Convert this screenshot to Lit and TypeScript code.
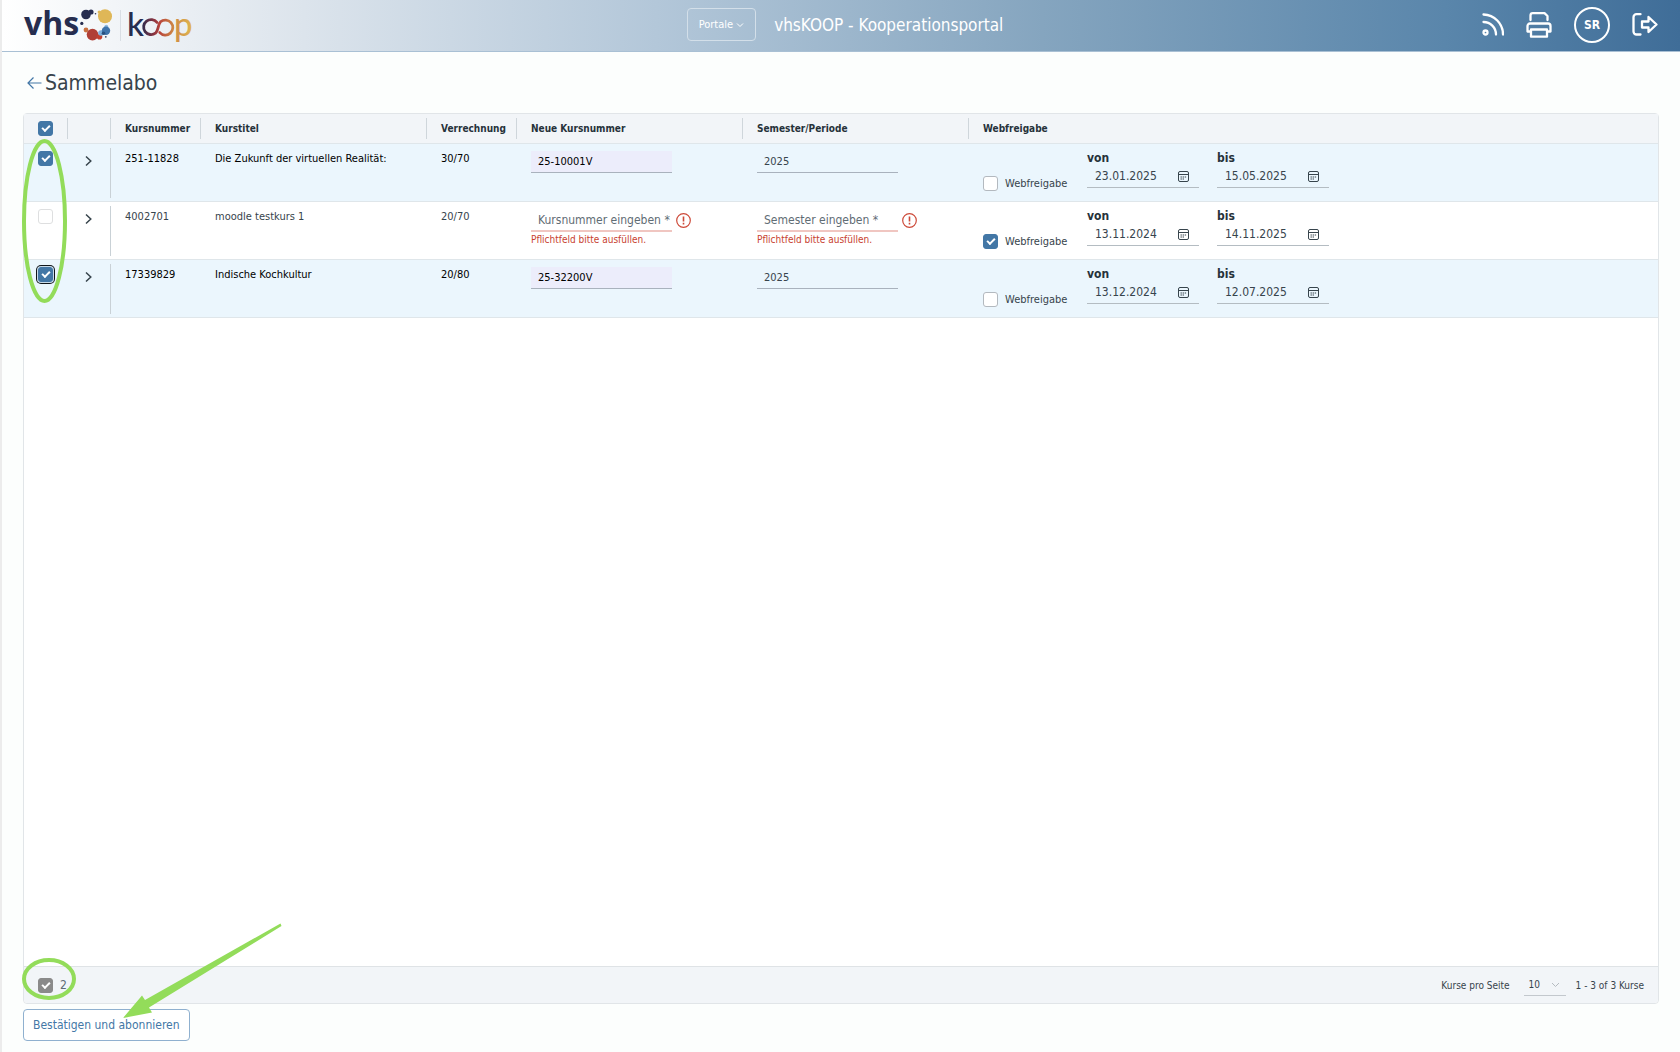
import { LitElement, html, css, nothing } from "lit";
import { customElement, property, state } from "lit/decorators.js";
import { classMap } from "lit/directives/class-map.js";

interface Course {
  id: string;
  title: string;
  split: string;
  newNumber: string;
  semester: string;
  release: boolean;
  from: string;
  to: string;
  selected: boolean;
  focused?: boolean;
}

const COURSES: Course[] = [
  { id: "251-11828", title: "Die Zukunft der virtuellen Realität:", split: "30/70", newNumber: "25-10001V", semester: "2025", release: false, from: "23.01.2025", to: "15.05.2025", selected: true },
  { id: "4002701", title: "moodle testkurs 1", split: "20/70", newNumber: "", semester: "", release: true, from: "13.11.2024", to: "14.11.2025", selected: false },
  { id: "17339829", title: "Indische Kochkultur", split: "20/80", newNumber: "25-32200V", semester: "2025", release: false, from: "13.12.2024", to: "12.07.2025", selected: true, focused: true },
];

const base = css`
  * { box-sizing: border-box; }
  button, input, select { font: inherit; color: inherit; margin: 0; }
  svg { display: block; flex: none; }
  .check {
    appearance: none;
    display: grid;
    place-items: center;
    flex: none;
    width: 15px;
    height: 15px;
    border: 1px solid #b3b9bf;
    border-radius: 3px;
    background: #fff;
  }
  .check.pale { border-color: #dedfe0; }
  .check:checked { background: #4377a6; border-color: #4377a6; }
  .check.grey:checked { background: #8a8a8a; border-color: #8a8a8a; }
  .check:checked::before {
    content: "";
    box-sizing: border-box;
    width: 8px;
    height: 5px;
    margin-bottom: 2px;
    border: solid #fff;
    border-width: 0 0 2px 2px;
    transform: rotate(-45deg);
  }
  .check.focused { box-shadow: 0 0 0 1px #c9dbe9, 0 0 0 2px #10151a; }
`;

@customElement("brand-logo")
export class BrandLogo extends LitElement {
  static styles = css`
    :host { display: block; }
    .logo { display: block; overflow: visible; }
    .vhs { font: 700 32px "Open Sans", sans-serif; fill: #262d4f; }
    .koop { font: 500 33px Lato, sans-serif; }
  `;
  render() {
    return html`<svg class="logo" width="180" height="48" viewBox="18 0 180 48" role="img" aria-label="vhs koop">
      <defs>
        <linearGradient id="inf" gradientUnits="userSpaceOnUse" x1="142" y1="0" x2="174" y2="0">
          <stop offset="0" stop-color="#2b2b4d" />
          <stop offset=".38" stop-color="#8c3440" />
          <stop offset=".55" stop-color="#b8443b" />
          <stop offset="1" stop-color="#cf8b45" />
        </linearGradient>
        <linearGradient id="pg" gradientUnits="userSpaceOnUse" x1="175" y1="0" x2="192" y2="0">
          <stop offset="0" stop-color="#cf8b45" />
          <stop offset="1" stop-color="#dfb750" />
        </linearGradient>
      </defs>
      <text class="vhs" x="24" y="34">vhs</text>
      <circle cx="86" cy="13.5" r="4.8" fill="#262d4f" />
      <circle cx="91" cy="11" r="2.6" fill="#262d4f" />
      <circle cx="95.5" cy="12.8" r=".8" fill="#262d4f" />
      <circle cx="81.8" cy="22.4" r="1.6" fill="#262d4f" />
      <circle cx="105" cy="15.3" r="7" fill="#dfb757" />
      <circle cx="99.2" cy="11" r="1.6" fill="#dfb757" />
      <circle cx="86" cy="29" r="2.4" fill="#c9703f" />
      <circle cx="92.5" cy="33.6" r="5.8" fill="#b03f35" />
      <circle cx="99.5" cy="35.8" r="2.8" fill="#c2402f" />
      <circle cx="101" cy="32" r="2.8" fill="#7eb0dc" />
      <circle cx="106.3" cy="25.6" r="1.9" fill="#8fbbe0" />
      <circle cx="106" cy="29.8" r="4.2" fill="#3f74ab" />
      <circle cx="103.5" cy="32.2" r="1.8" fill="#28507f" />
      <circle cx="105.8" cy="35.8" r=".9" fill="#3b4360" />
      <rect x="120" y="9" width="1" height="31" fill="#d9dee4" />
      <text class="koop" x="127" y="35" fill="#262d4f">k</text>
      <path d="M157 21.400 A7.500 7.500 0 1 0 155.500 32.200 C158.500 29.500 157.500 25 160.500 20.800 A7.500 7.500 0 1 1 159.800 31.600"
        fill="none" stroke="url(#inf)" stroke-width="2.800" stroke-linecap="round" />
      <text class="koop" x="174" y="35" fill="url(#pg)">p</text>
    </svg>`;
  }
}

@customElement("app-header")
export class AppHeader extends LitElement {
  static styles = [base, css`
    :host {
      display: grid;
      grid-template-columns: 1fr auto 1fr;
      align-items: center;
      height: 52px;
      padding: 0 22px 2px 16px;
      color: #fff;
      background: linear-gradient(90deg, #fff 0%, #dce4ec 18%, #b3c7d9 39%, #85a5bf 62%, #5a86ab 86%, #3f6d98 100%);
      border-bottom: 1px solid #a9c0d4;
    }
    .mid { display: flex; align-items: center; gap: 18px; padding-left: 14px; }
    .portal {
      display: flex;
      align-items: center;
      gap: 3px;
      height: 33px;
      padding: 0 11px;
      border: 1px solid #d3dfe9;
      border-radius: 4px;
      background: none;
      font-size: 11px;
    }
    .name { font-size: 17px; white-space: nowrap; }
    .tools { display: flex; align-items: center; justify-content: flex-end; gap: 22px; }
    .tool { display: block; padding: 0; border: 0; background: none; }
    .user {
      width: 36px;
      height: 36px;
      padding: 0;
      border: 2px solid #fff;
      border-radius: 50%;
      background: none;
      font-size: 12px;
      font-weight: 700;
    }
  `];
  render() {
    return html`
      <brand-logo></brand-logo>
      <div class="mid">
        <button class="portal">Portale
          <svg width="8" height="6" viewBox="0 0 8 6" fill="none" stroke="#fff"><path d="M1 1.500 4 4.500 7 1.500" /></svg>
        </button>
        <span class="name">vhsKOOP - Kooperationsportal</span>
      </div>
      <div class="tools">
        <button class="tool" aria-label="RSS">
          <svg width="22" height="23" viewBox="0 0 22 23" fill="none" stroke="#fff" stroke-width="2.300" stroke-linecap="round">
            <circle cx="3.500" cy="19.500" r="2" /><path d="M1.500 9A12.500 12.500 0 0 1 14 21.500M1.500 1.500A20 20 0 0 1 21 21.500" />
          </svg>
        </button>
        <button class="tool" aria-label="Drucken">
          <svg width="26" height="26" viewBox="0 0 26 26" fill="none" stroke="#fff" stroke-width="2.300" stroke-linejoin="round" stroke-linecap="round">
            <path d="M4.500 8V3.500a2.300 2.300 0 0 1 2.300-2.300h11.700L21.500 4v4M5 19.500H1.500v-5.500a2.500 2.500 0 0 1 2.500-2.500h18a2.500 2.500 0 0 1 2.500 2.500v5.500H21M5 17.500h16v7.200H5z" />
          </svg>
        </button>
        <button class="user">SR</button>
        <button class="tool" aria-label="Abmelden">
          <svg width="26" height="23" viewBox="0 0 26 23" fill="none" stroke="#fff" stroke-width="2.300" stroke-linejoin="round" stroke-linecap="round">
            <path d="M8.500 1.200H4.500a3 3 0 0 0-3 3v14.300a3 3 0 0 0 3 3h4" />
            <path d="M10 8.500h6.500V4l8 7.500-8 7.500v-4.500H10z" />
          </svg>
        </button>
      </div>`;
  }
}

@customElement("date-field")
export class DateField extends LitElement {
  @property() label = "";
  @property() value = "";
  static styles = [base, css`
    :host { display: flex; flex-direction: column; width: 112px; }
    .label { font-size: 12px; font-weight: 700; line-height: 14px; color: #26323a; }
    .box { display: flex; align-items: center; height: 23px; border-bottom: 1px solid #b4bcc2; }
    .input { width: 80px; min-width: 0; flex: 1; height: 21px; padding: 0 0 0 8px; border: 0; background: none; outline: none; font-size: 12px; }
    .pick { padding: 0; margin-right: 10px; border: 0; background: none; }
  `];
  render() {
    return html`
      <label class="label" for="d">${this.label}</label>
      <div class="box">
        <input class="input" id="d" .value=${this.value} />
        <button class="pick" aria-label="Datum wählen">
          <svg width="11" height="11" viewBox="0 0 11 11" fill="none" stroke="#37444c">
            <rect x=".5" y=".5" width="10" height="10" rx="1.500" /><path d="M1 3.500h9" /><path d="M2.500 6h6M2.500 8h4" stroke-dasharray="1.400 .7" stroke-width="1.100" />
          </svg>
        </button>
      </div>`;
  }
}

@customElement("course-field")
export class CourseField extends LitElement {
  @property() value = "";
  @property() hint = "";
  @property({ type: Boolean }) filled = false;
  static styles = [base, css`
    :host { display: block; }
    .line { display: flex; align-items: center; gap: 4px; }
    .input {
      width: 141px;
      height: 22px;
      padding: 0 0 0 7px;
      border: 0;
      border-bottom: 1px solid #a9b2bd;
      border-radius: 0;
      background: none;
      outline: none;
    }
    .input.filled { background: #ecedfb; color: #000; }
    .input.bad { height: 23px; padding-top: 1px; border-bottom: 2px solid #f0c6c1; font-size: 12px; }
    .input::placeholder { color: #5f6c74; opacity: 1; }
    .error { margin: 2px 0 0; font-size: 10px; line-height: 12px; color: #c8412f; }
  `];
  render() {
    const bad = !this.value;
    return html`
      <div class="line">
        <input class=${classMap({ input: true, bad, filled: this.filled })} aria-label=${this.hint}
          placeholder=${`${this.hint} eingeben *`} .value=${this.value} />
        ${bad ? html`<svg width="15" height="15" viewBox="0 0 15 15" fill="none" stroke="#cd4a39" stroke-width="1.200">
          <circle cx="7.500" cy="7.500" r="6.800" /><path d="M7.500 3.500v5M7.500 9.800v1.600" stroke-width="1.600" /></svg>` : nothing}
      </div>
      ${bad ? html`<p class="error">Pflichtfeld bitte ausfüllen.</p>` : nothing}`;
  }
}

@customElement("course-grid")
export class CourseGrid extends LitElement {
  @state() private courses = COURSES;

  static styles = [base, css`
    :host {
      position: relative;
      display: flex;
      flex-direction: column;
      flex: 1;
      background: #fff;
      border: 1px solid #e1e5e8;
      border-radius: 4px;
    }
    .table { width: 100%; table-layout: fixed; border-spacing: 0; }
    .c-check { width: 44px; }
    .c-open { width: 43px; }
    .c-small { width: 90px; }
    .c-wide { width: 226px; }
    .head th {
      height: 30px;
      padding: 0 0 0 14px;
      text-align: left;
      font-size: 10px;
      white-space: nowrap;
      color: #26323a;
      border-bottom: 1px solid #dfe6ea;
      background: linear-gradient(#cfd6db, #cfd6db) right center / 1px 21px no-repeat #f2f5f8;
    }
    .head th:last-child { background: #f2f5f8; }
    .row td { height: 58px; padding: 7px 0 0 14px; vertical-align: top; font-size: 11px; line-height: 16px; border-bottom: 1px solid #dfe6ea; white-space: nowrap; }
    .row.on { background: #ebf6fd; }
    .row.on .text { color: #000; }
    .row .sep { background: linear-gradient(#c9d1d6, #c9d1d6) right center / 1px 50px no-repeat; }
    .open { display: block; padding: 4px 4px 4px 3px; border: 0; background: none; }
    .release { display: flex; gap: 18px; align-items: flex-start; }
    .web { display: flex; align-items: center; gap: 7px; width: 86px; height: 15px; margin-top: 25px; }
    .space { flex: 1; }
    .foot {
      position: relative;
      display: flex;
      align-items: center;
      height: 37px;
      padding: 0 14px;
      font-size: 10px;
      background: #f2f5f8;
      border-top: 1px solid #dfe3e6;
      border-radius: 0 0 4px 4px;
    }
    .count { display: flex; align-items: center; gap: 7px; flex: 1; font-size: 12px; color: #5f6c74; }
    .size { display: flex; align-items: center; gap: 14px; }
    .pick { display: flex; align-items: center; border-bottom: 1px solid #c3c8cd; margin-right: 10px; width: 42px; height: 22px; }
    .select { appearance: none; width: 27px; height: 20px; padding: 0 0 0 5px; border: 0; background: none; }
    .mark { position: absolute; pointer-events: none; z-index: 1; }
    .mark-rows { left: -3px; top: 24px; }
    .mark-count { left: -2px; bottom: -18px; }
  `];

  private toggle(i: number) {
    this.courses = this.courses.map((c, n) => (n === i ? { ...c, selected: !c.selected } : c));
  }

  render() {
    return html`
      <table class="table">
        <colgroup>
          <col class="c-check" /><col class="c-open" /><col class="c-small" /><col class="c-wide" />
          <col class="c-small" /><col class="c-wide" /><col class="c-wide" /><col />
        </colgroup>
        <thead>
          <tr class="head">
            <th><input class="check" type="checkbox" aria-label="Alle auswählen" checked /></th>
            <th></th><th>Kursnummer</th><th>Kurstitel</th><th>Verrechnung</th>
            <th>Neue Kursnummer</th><th>Semester/Periode</th><th>Webfreigabe</th>
          </tr>
        </thead>
        <tbody>${this.courses.map((c, i) => this.row(c, i))}</tbody>
      </table>
      <div class="space"></div>
      <div class="foot">
        <label class="count"><input class="check grey" type="checkbox" checked />${this.courses.filter((c) => c.selected).length}</label>
        <div class="size">
          <label for="size">Kurse pro Seite</label>
          <div class="pick">
            <select class="select" id="size"><option>10</option><option>25</option></select>
            <svg width="9" height="6" viewBox="0 0 9 6" fill="none" stroke="#b5bbc0"><path d="M1 1 4.500 4.500 8 1" /></svg>
          </div>
        </div>
        <span>1 - 3 of 3 Kurse</span>
        <svg class="mark mark-count" width="262" height="100" viewBox="22 921 262 100">
          <ellipse cx="49" cy="979" rx="25" ry="19" fill="none" stroke="#93dc5a" stroke-width="4" />
          <path d="M280.500 923.500 145 1000 142 995.500 123 1018 152 1012.500 149 1007.500 281.500 926z" fill="#93dc5a" />
        </svg>
      </div>
      <svg class="mark mark-rows" width="48" height="168" viewBox="0 0 48 168">
        <ellipse cx="23.500" cy="83" rx="20.500" ry="80" fill="none" stroke="#93dc5a" stroke-width="4" />
      </svg>`;
  }

  private row(c: Course, i: number) {
    return html`
      <tr class=${classMap({ row: true, on: c.selected })}>
        <td><input class=${classMap({ check: true, pale: true, focused: !!c.focused })} type="checkbox"
          aria-label=${`${c.title} auswählen`} .checked=${c.selected} @change=${() => this.toggle(i)} /></td>
        <td class="sep"><button class="open" aria-label="Details">
          <svg width="8" height="12" viewBox="0 0 8 12" fill="none" stroke="#37444c" stroke-width="1.500"><path d="M1 1.500 5.800 6 1 10.500" /></svg>
        </button></td>
        <td class="text">${c.id}</td>
        <td class="text">${c.title}</td>
        <td class="text">${c.split}</td>
        <td><course-field hint="Kursnummer" value=${c.newNumber} ?filled=${!!c.newNumber}></course-field></td>
        <td><course-field hint="Semester" value=${c.semester}></course-field></td>
        <td><div class="release">
          <label class="web"><input class="check" type="checkbox" .checked=${c.release} />Webfreigabe</label>
          <date-field label="von" value=${c.from}></date-field>
          <date-field label="bis" value=${c.to}></date-field>
        </div></td>
      </tr>`;
  }
}

@customElement("app-root")
export class AppRoot extends LitElement {
  static styles = [base, css`
    :host {
      display: flex;
      flex-direction: column;
      min-height: 100vh;
      box-sizing: border-box;
      border-left: 2px solid #ececec;
      background: #fcfefd;
      color: #37444c;
      font: 12px "DejaVu Sans Condensed", "DejaVu Sans", sans-serif;
    }
    .page { display: flex; flex-direction: column; flex: 1; padding: 16px 21px 11px 21px; }
    .title { display: flex; align-items: center; gap: 3px; height: 30px; margin-bottom: 15px; padding-left: 4px; }
    .back { display: block; }
    .heading { margin: 0; font-size: 21px; font-weight: 400; }
    .confirm {
      align-self: flex-start;
      height: 32px;
      margin-top: 5px;
      padding: 0 9px;
      border: 1px solid #8fb0cf;
      border-radius: 4px;
      background: #fff;
      color: #4377a6;
    }
  `];
  render() {
    return html`
      <app-header></app-header>
      <main class="page">
        <div class="title">
          <a class="back" href="#" aria-label="Zurück">
            <svg width="15" height="14" viewBox="0 0 15 14" fill="none" stroke="#4377a6" stroke-width="1.200"><path d="M14.500 7H1M6.500 1.500 1 7l5.500 5.500" /></svg>
          </a>
          <h1 class="heading">Sammelabo</h1>
        </div>
        <course-grid></course-grid>
        <button class="confirm">Bestätigen und abonnieren</button>
      </main>`;
  }
}
